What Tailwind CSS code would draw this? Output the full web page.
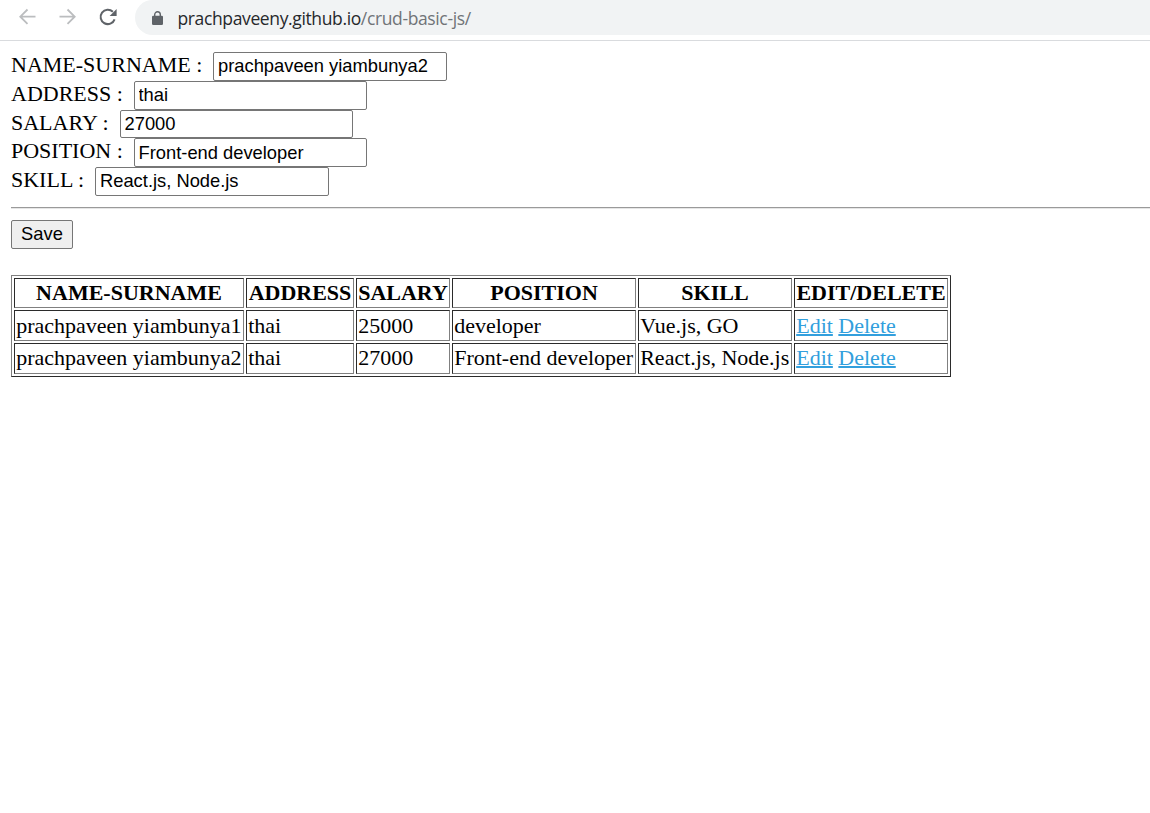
<!DOCTYPE html>
<html lang="en">
<head>
<meta charset="utf-8">
<title>CRUD basic</title>
<script src="https://cdn.jsdelivr.net/npm/@tailwindcss/browser@4"></script>
</head>
<body class="bg-white text-black h-[813px] overflow-hidden">
<header class="h-[41px] border-b border-[#d9dbde] flex items-start">
  <svg class="w-[135px] h-9 shrink-0" viewBox="0 0 135 36" fill="none" stroke-width="1.8">
    <path d="M35.5 16.7H20.5M27.5 9.5L20.3 16.7L27.5 23.9" stroke="#bbbdbf"/>
    <path d="M59.5 16.7H74.5M67.5 9.5L74.7 16.7L67.5 23.9" stroke="#bbbdbf"/>
    <path d="M112.9 11.8A7.2 7.2 0 1 0 114.6 19.3" stroke="#5f6368" stroke-width="2"/>
    <path d="M116.6 9V16H109.6Z" fill="#5f6368"/>
  </svg>
  <div class="h-[35px] flex-1 bg-[#f1f3f4] rounded-l-full flex items-center pl-[17px]">
    <svg class="w-[11px] h-[14px]" viewBox="0 0 11 14" fill="none"><rect x="0" y="4.8" width="11" height="9.2" rx="1.3" fill="#5f6368"/><path d="M2.7 5.5V3.6a2.8 2.8 0 0 1 5.6 0V5.5" stroke="#5f6368" stroke-width="1.4"/></svg>
    <span class="ml-[14.5px] pt-[2px] font-['Open_Sans',sans-serif] text-[17.5px] leading-[33px] tracking-[-0.37px] whitespace-nowrap text-[#26282b]">prachpaveeny.github.io<span class="text-[#707478]">/crud-basic-js/</span></span>
  </div>
</header>
<main class="pl-[11px] pt-[11px] font-['Liberation_Serif',serif] text-[22px] leading-[26px]">
  <form>
    <div class="flex h-[29px]"><label for="name" class="w-[202px] whitespace-nowrap">NAME-SURNAME :</label><input id="name" value="prachpaveen yiambunya2" class="w-[234px] h-[29px] border border-[#767676] rounded-[2px] px-1 pb-[2px] font-['Liberation_Sans',sans-serif] text-[18.33px]"></div>
    <div class="flex h-[29px]"><label for="address" class="w-[123px] whitespace-nowrap">ADDRESS :</label><input id="address" value="thai" class="w-[233px] h-[29px] border border-[#767676] rounded-[2px] pl-[3.5px] pr-1 pb-[2px] font-['Liberation_Sans',sans-serif] text-[18.33px]"></div>
    <div class="flex h-[28px]"><label for="salary" class="w-[109px] whitespace-nowrap">SALARY :</label><input id="salary" value="27000" class="w-[233px] h-[28px] border border-[#767676] rounded-[2px] pl-[3.5px] pr-1 font-['Liberation_Sans',sans-serif] text-[18.33px]"></div>
    <div class="flex h-[29px]"><label for="position" class="w-[123px] whitespace-nowrap">POSITION :</label><input id="position" value="Front-end developer" class="w-[233px] h-[29px] border border-[#767676] rounded-[2px] pl-[3.5px] pr-1 font-['Liberation_Sans',sans-serif] text-[18.33px]"></div>
    <div class="flex h-[29px]"><label for="skill" class="w-[84px] whitespace-nowrap">SKILL :</label><input id="skill" value="React.js, Node.js" class="w-[234px] h-[29px] border border-[#767676] rounded-[2px] px-1 pb-[2px] font-['Liberation_Sans',sans-serif] text-[18.33px]"></div>
    <hr class="mt-[11px] h-[2px] border-0 border-t border-[#9a9a9a] bg-[#e6e6e6]">
    <button type="button" class="block mt-[11px] w-[62px] h-[29px] pb-[2px] border border-[#767676] rounded-[2px] bg-[#efefef] font-['Liberation_Sans',sans-serif] text-[18.33px]">Save</button>
  </form>
  <table class="mt-[26px] w-[940px] table-fixed border-separate border-spacing-[2px] border border-t-[#808080] border-l-[#808080] border-b-[#2b2b2b] border-r-[#2b2b2b] whitespace-nowrap [&_:is(td,th)]:border [&_:is(td,th)]:border-t-[#2b2b2b] [&_:is(td,th)]:border-l-[#2b2b2b] [&_:is(td,th)]:border-b-[#808080] [&_:is(td,th)]:border-r-[#808080] [&_:is(td,th)]:px-[1.2px] [&_a]:text-[#329fdd] [&_a]:underline [&_a]:decoration-2">
    <colgroup><col class="w-[230px]"><col class="w-[108px]"><col class="w-[94px]"><col class="w-[184px]"><col class="w-[154px]"><col class="w-[154px]"></colgroup>
    <tr class="h-[30px]"><th>NAME-SURNAME</th><th>ADDRESS</th><th>SALARY</th><th>POSITION</th><th>SKILL</th><th>EDIT/DELETE</th></tr>
    <tr class="h-[31px]"><td>prachpaveen yiambunya1</td><td>thai</td><td>25000</td><td>developer</td><td>Vue.js, GO</td><td><a href="#">Edit</a> <a href="#">Delete</a></td></tr>
    <tr class="h-[31px] [&>td]:pb-[2px]"><td>prachpaveen yiambunya2</td><td>thai</td><td>27000</td><td>Front-end developer</td><td>React.js, Node.js</td><td><a href="#">Edit</a> <a href="#">Delete</a></td></tr>
  </table>
</main>
</body>
</html>
